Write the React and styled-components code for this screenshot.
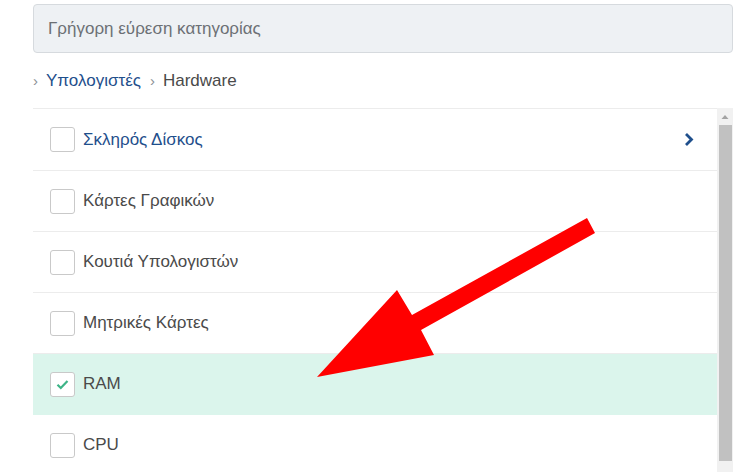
import React from 'react';
import styled, { createGlobalStyle } from 'styled-components';

const GlobalStyle = createGlobalStyle`
  html, body {
    margin: 0;
    padding: 0;
    height: 472px;
    overflow: hidden;
    background: #ffffff;
    font-family: "Liberation Sans", Arial, sans-serif;
  }
`;

const categories = [
  { id: 1, name: 'Σκληρός Δίσκος', hasChildren: true },
  { id: 2, name: 'Κάρτες Γραφικών' },
  { id: 3, name: 'Κουτιά Υπολογιστών' },
  { id: 4, name: 'Μητρικές Κάρτες' },
  { id: 5, name: 'RAM', checked: true },
  { id: 6, name: 'CPU' },
];

const thumbShare = 0.92;

const App = () => {
  return (
    <PageStyled>
      <GlobalStyle />
      <SearchInput placeholder="Γρήγορη εύρεση κατηγορίας" />
      <Breadcrumb>
        <Sep>›</Sep>
        <CrumbLink>Υπολογιστές</CrumbLink>
        <Sep>›</Sep>
        <CrumbCurrent>Hardware</CrumbCurrent>
      </Breadcrumb>
      <ListFrame>
        <CategoryList>
          {categories.map((cat) => (
            <CategoryRow key={cat.id} $checked={cat.checked}>
              <CheckBox $checked={cat.checked}>
                {cat.checked && (
                  <svg width="13" height="11" viewBox="0 0 13 11">
                    <path d="M1.5 5.8 L4.8 9 L11.5 2" fill="none" stroke="#3db487" strokeWidth="2.2" />
                  </svg>
                )}
              </CheckBox>
              <CategoryName $link={cat.hasChildren}>{cat.name}</CategoryName>
              {cat.hasChildren && (
                <Chevron width="10" height="15" viewBox="0 0 10 15">
                  <path d="M2 2 L7.5 7.5 L2 13" fill="none" stroke="#1f4f8c" strokeWidth="2.8" />
                </Chevron>
              )}
            </CategoryRow>
          ))}
        </CategoryList>
        <ScrollTrack>
          <ScrollButton>
            <svg width="16" height="16" viewBox="0 0 16 16">
              <polygon points="4.5,11 11.5,11 8,7" fill="#a3a3a3" />
            </svg>
          </ScrollButton>
          <ScrollThumb style={{ height: `${Math.round(thumbShare * 365)}px` }} />
        </ScrollTrack>
      </ListFrame>
      <Pointer width="750" height="472" viewBox="0 0 750 472">
        <polygon
          points="587,218 595,233 421,330 434,355 317,377 397,290 412,315"
          fill="#ff0000"
        />
      </Pointer>
    </PageStyled>
  );
};

const PageStyled = styled.div`
  position: relative;
  width: 700px;
  padding: 4px 0 0 33px;
  display: flex;
  flex-direction: column;
`;

const SearchInput = styled.input`
  box-sizing: border-box;
  width: 700px;
  height: 49px;
  border: 1px solid #d6dade;
  border-radius: 4px;
  background: #eef1f4;
  padding: 0 14px;
  font-family: "Liberation Sans", Arial, sans-serif;
  font-size: 17px;
  outline: none;
  &::placeholder {
    color: #6c7075;
  }
`;

const Breadcrumb = styled.div`
  display: flex;
  align-items: center;
  height: 55px;
  font-size: 17px;
`;

const Sep = styled.span`
  color: #8a8f95;
  font-size: 15px;
  margin-right: 8px;
  &:not(:first-child) {
    margin-left: 9px;
  }
`;

const CrumbLink = styled.span`
  color: #1f4f8c;
`;

const CrumbCurrent = styled.span`
  color: #4a4a4a;
`;

const ListFrame = styled.div`
  display: flex;
  width: 700px;
  height: 364px;
  overflow: hidden;
`;

const CategoryList = styled.div`
  flex: 1;
  border-top: 1px solid #ececec;
`;

const CategoryRow = styled.div`
  display: flex;
  align-items: center;
  height: 61px;
  box-sizing: border-box;
  padding: 0 23px 0 17px;
  border-bottom: 1px solid ${(p) => (p.$checked ? '#dbf5ec' : '#ececec')};
  background: ${(p) => (p.$checked ? '#dbf5ec' : '#ffffff')};
  &:first-child {
    height: 62px;
  }
`;

const CheckBox = styled.span`
  box-sizing: border-box;
  width: 25px;
  height: 25px;
  flex-shrink: 0;
  border: 1px solid #c9c9c9;
  border-radius: 3px;
  background: #ffffff;
  display: flex;
  align-items: center;
  justify-content: center;
  margin-right: 8px;
`;

const CategoryName = styled.span`
  flex: 1;
  font-size: 17px;
  color: ${(p) => (p.$link ? '#1f4f8c' : '#4a4a4a')};
`;

const Chevron = styled.svg`
  flex-shrink: 0;
`;

const ScrollTrack = styled.div`
  width: 16px;
  flex-shrink: 0;
  background: #f1f1f1;
  display: flex;
  flex-direction: column;
  align-items: center;
`;

const ScrollButton = styled.div`
  width: 16px;
  height: 16px;
  display: flex;
`;

const ScrollThumb = styled.div`
  width: 13px;
  margin-top: 1px;
  margin-left: 1px;
  background: #c1c1c1;
`;

const Pointer = styled.svg`
  position: absolute;
  top: 0;
  left: 0;
  pointer-events: none;
`;

export default App;
